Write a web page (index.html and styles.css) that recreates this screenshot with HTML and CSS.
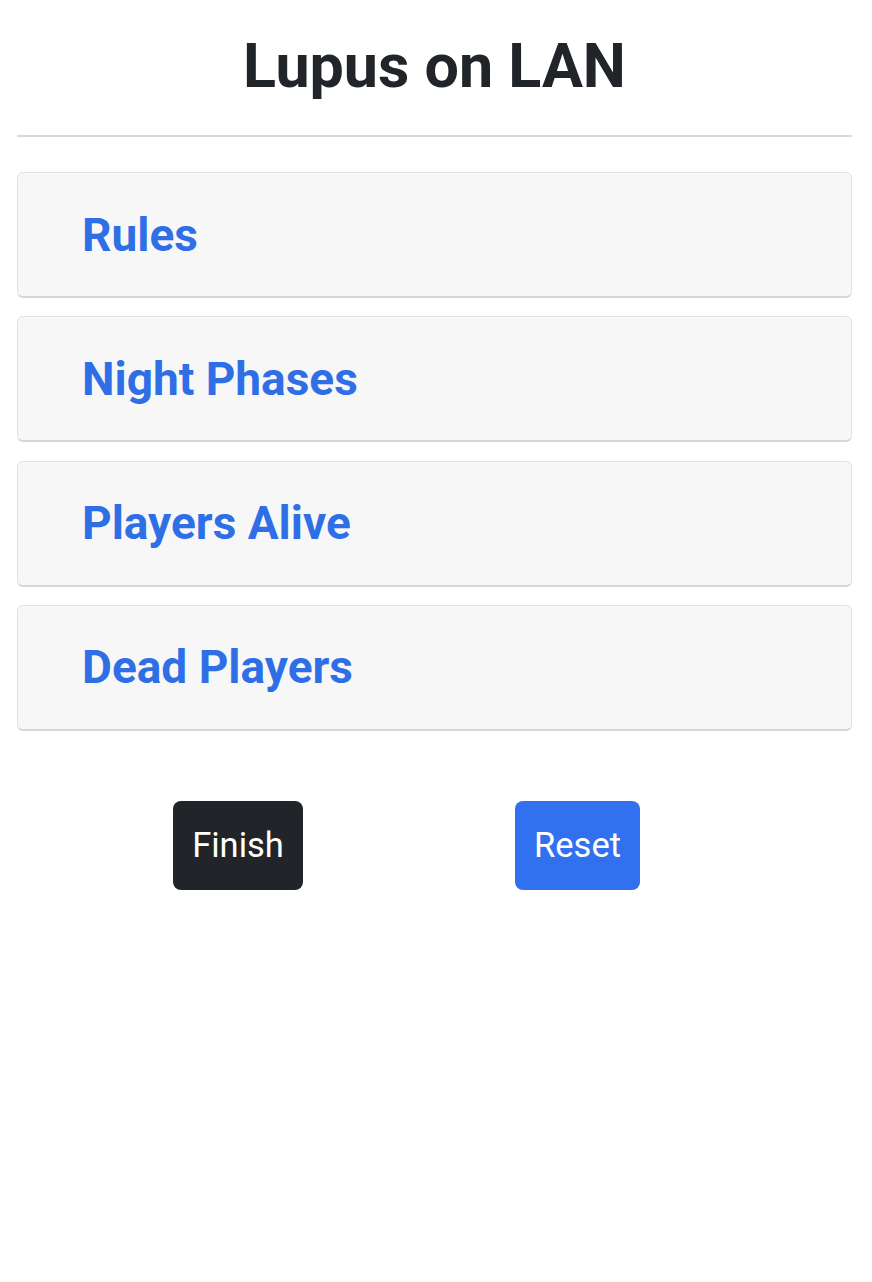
FILE: index.html
```html
<!DOCTYPE html>
<html>
<head>
<meta charset="utf-8">
<link rel="stylesheet" href="styles.css">
</head>
<body>
<div class="page">
  <h1 class="title">Lupus on LAN</h1>
  <hr class="rule">
  <div class="sections">
    <div class="card"><span class="card-title">Rules</span></div>
    <div class="card"><span class="card-title">Night Phases</span></div>
    <div class="card"><span class="card-title">Players Alive</span></div>
    <div class="card"><span class="card-title">Dead Players</span></div>
  </div>
  <div class="actions">
    <button class="btn btn-dark">Finish</button>
    <button class="btn btn-blue">Reset</button>
  </div>
</div>
</body>
</html>
```
FILE: styles.css
```css
html, body {
  margin: 0;
  padding: 0;
  background: #ffffff;
}
body {
  font-family: Roboto, "Liberation Sans", sans-serif;
  color: #212529;
}
.page {
  padding: 0 20px 0 17px;
}
.title {
  margin: 0;
  padding-top: 26px;
  height: 80px;
  text-align: center;
  font-size: 61px;
  line-height: 80px;
  font-weight: 700;
  color: #212529;
}
.rule {
  margin: 29px 0 0 0;
  border: 0;
  border-top: 2px solid #d9d9d9;
  height: 0;
}
.sections {
  margin-top: 35px;
  display: flex;
  flex-direction: column;
  gap: 18.3px;
}
.card {
  height: 126px;
  box-sizing: border-box;
  background: #f7f7f7;
  border: 1px solid #e2e2e2;
  border-bottom: 2px solid #d6d6d6;
  border-radius: 6px;
  display: flex;
  align-items: center;
  padding-left: 64px;
}
.card-title {
  font-size: 46px;
  font-weight: 700;
  color: #2f6fe6;
  line-height: 1;
}
.actions {
  margin-top: 70px;
  display: flex;
  gap: 212px;
  padding-left: 156px;
}
.btn {
  height: 89px;
  border: 0;
  border-radius: 8px;
  font-family: Roboto, "Liberation Sans", sans-serif;
  font-size: 34.5px;
  color: #ffffff;
  padding: 0;
}
.btn-dark {
  width: 130px;
  background: #212529;
}
.btn-blue {
  width: 125px;
  background: #3171f0;
}
```
